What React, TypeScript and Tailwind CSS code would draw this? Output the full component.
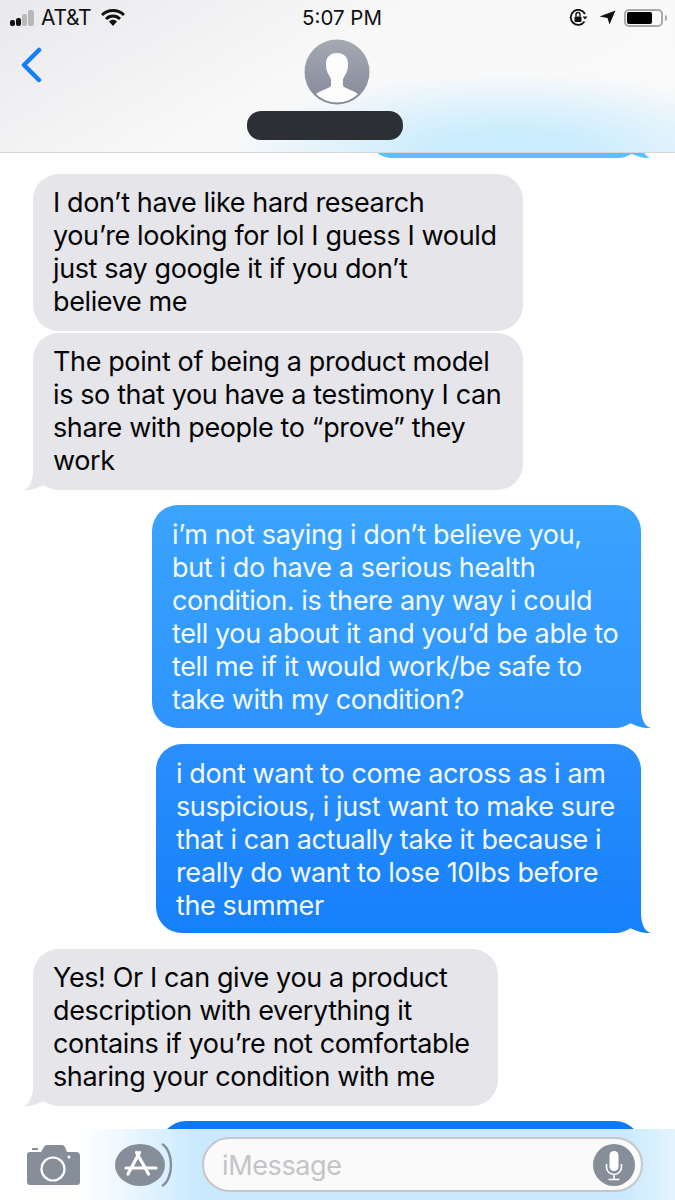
import React, { useId } from "react";

function TailR({ color, top, flip }: { color: string; top?: string; flip?: boolean }) {
  const id = useId();
  return (
    <svg
      width="40"
      height="30"
      viewBox="0 0 40 30"
      className={flip ? "absolute bottom-0 left-[-10px] -scale-x-100" : "absolute bottom-0 right-[-10px]"}
    >
      <defs>
        <linearGradient id={id} x1="0" y1="0" x2="0" y2="1">
          <stop offset="0" stopColor={top ?? color} />
          <stop offset="1" stopColor={color} />
        </linearGradient>
      </defs>
      <path d="M30 3 L30 10 C30 21 34 29 40 30 C32 30.5 25 28 19 25 C14 28 8 30 1 30 L0 3 Z" fill={`url(#${id})`} />
    </svg>
  );
}

function Lines({ lines }: { lines: string[] }) {
  return (
    <div className="relative z-[1]">
      {lines.map((l, i) => (
        <div key={i} className="whitespace-nowrap">{l}</div>
      ))}
    </div>
  );
}

function Gray({ lines, width, mt, tail }: { lines: string[]; width: string; mt: string; tail?: boolean }) {
  return (
    <div className={`relative self-start ml-[33px] ${mt} ${width} bg-[#e5e5ea] rounded-[26px] pl-[20px] pt-[12px] pb-[13px] text-[#050507]`}>
      <Lines lines={lines} />
      {tail && <TailR color="#e5e5ea" flip />}
    </div>
  );
}

function Blue({ lines, width, mt, bg, tailColor, tailTop, pb }: { lines: string[]; width: string; mt: string; bg: string; tailColor: string; tailTop: string; pb: string }) {
  return (
    <div className={`relative self-end mr-[34px] ${mt} ${width} ${bg} ${pb} rounded-[26px] pl-[20px] pt-[13px] text-[#f4f9ff]`}>
      <Lines lines={lines} />
      <TailR color={tailColor} top={tailTop} />
    </div>
  );
}

function StatusBar() {
  return (
    <div className="h-[35px] grid grid-cols-[1fr_auto_1fr] items-center pl-[10px] pr-[8px] text-[#111]">
      <div className="flex items-center">
        <div className="flex items-end gap-[1px] h-[16px] w-[26px]">
          <div className="w-[5px] h-[6px] rounded-[2px] bg-[#111]" />
          <div className="w-[5px] h-[8px] rounded-[2px] bg-[#111]" />
          <div className="w-[5px] h-[12px] rounded-[2px] bg-[#b9b9bc]" />
          <div className="w-[6px] h-[16px] rounded-[2px] bg-[#b9b9bc]" />
        </div>
        <span className="ml-[5px] text-[21px] leading-[24px] tracking-[-0.3px]">AT&amp;T</span>
        <svg width="24" height="17" viewBox="0 0 24 17" className="ml-[10px]">
          <path d="M1 6 C7 0 17 0 23 6" fill="none" stroke="#111" strokeWidth="3" />
          <path d="M5 10 C9 6 15 6 19 10" fill="none" stroke="#111" strokeWidth="3" />
          <path d="M8 12.5 C10.5 10 13.5 10 16 12.5 L12 17 Z" fill="#111" />
        </svg>
      </div>
      <div className="ml-[7px] text-[20.5px] leading-[24px]">5:07 PM</div>
      <div className="flex items-center justify-end">
        <svg width="19" height="17" viewBox="0 0 19 17">
          <path d="M15.5 12.5 A7.5 7.5 0 1 1 16 5" fill="none" stroke="#111" strokeWidth="1.8" />
          <path d="M13.5 7.5 L18.5 7.5 L16 10.5 Z" fill="#111" />
          <rect x="5.5" y="7.5" width="7" height="5.5" rx="1" fill="#111" />
          <path d="M7 7.5 V5.5 A2 2 0 0 1 11 5.5 V7.5" fill="none" stroke="#111" strokeWidth="1.4" />
        </svg>
        <svg width="17" height="15" viewBox="0 0 17 15" className="ml-[11px]">
          <path d="M0.5 6.5 L16.5 0.5 L10.5 14.5 L8.5 8 Z" fill="#111" />
        </svg>
        <div className="ml-[8px] w-[39px] h-[18px] rounded-[5px] border-2 border-[#a9a9ad] p-[1px] pr-[9px]">
          <div className="h-full rounded-[2px] bg-black" />
        </div>
        <div className="ml-[2px] w-[2px] h-[6px] rounded-r-[2px] bg-[#a9a9ad]" />
      </div>
    </div>
  );
}

function Header() {
  return (
    <div className="relative z-10 h-[153px] shrink-0 border-b border-[#d6d7d9] bg-[radial-gradient(ellipse_280px_80px_at_510px_153px,#c9ecfe_25%,rgba(220,242,254,0)_100%),linear-gradient(150deg,#e9e9ec,#f8f8f9_45%,#fafafa)]">
      <StatusBar />
      <div className="flex items-start">
        <svg width="24" height="38" viewBox="0 0 24 38" className="ml-[20px] mt-[12px]">
          <path d="M19 3 L4 18 L19 33" fill="none" stroke="#147efb" strokeWidth="4.5" strokeLinecap="round" strokeLinejoin="round" />
        </svg>
        <div className="ml-[203px] flex flex-col items-start">
          <svg width="66" height="66" viewBox="0 0 66 66" className="ml-[57px] mt-[4px]">
            <defs>
              <linearGradient id="av" x1="0" y1="0" x2="0" y2="1">
                <stop offset="0" stopColor="#a5a9b3" />
                <stop offset="1" stopColor="#85899a" />
              </linearGradient>
              <clipPath id="avc"><circle cx="33" cy="33" r="30.5" /></clipPath>
            </defs>
            <circle cx="33" cy="33" r="32.5" fill="url(#av)" />
            <path
              clipPath="url(#avc)"
              d="M33 14 C26 14 22 18 22 25 C22 28 22 30 23 32 C24 36 27 38 27 41 L27 47 C24 50 17 51 12 55 L12 66 L54 66 L54 55 C49 51 42 50 39 47 L39 41 C39 38 42 36 43 32 C44 30 44 28 44 25 C44 18 40 14 33 14 Z"
              fill="#fdfdfe"
            />
          </svg>
          <div className="mt-[6px] w-[156px] h-[29px] rounded-[14px] bg-[#2c2f33]" />
        </div>
      </div>
    </div>
  );
}

function Messages() {
  return (
    <div className="flex-1 min-h-0 overflow-hidden flex flex-col text-[27px] leading-[33px] tracking-[-0.38px] font-[Inter,sans-serif]">
      <div className="relative self-end mr-[34px] -mt-[40px] w-[272px] h-[45px] shrink-0 rounded-[26px] bg-[#5bc0fb]">
        <TailR color="#5bc0fb" />
      </div>
      <Gray
        mt="mt-[16px]"
        width="w-[490px]"
        lines={["I don’t have like hard research", "you’re looking for lol I guess I would", "just say google it if you don’t", "believe me"]}
      />
      <Gray
        mt="mt-[2px]"
        width="w-[490px]"
        tail
        lines={["The point of being a product model", "is so that you have a testimony I can", "share with people to “prove” they", "work"]}
      />
      <Blue
        mt="mt-[15px]"
        width="w-[489px]"
        pb="pb-[12px]"
        bg="bg-[linear-gradient(#3aa4fe,#2d94fd)]"
        tailColor="#2d94fd"
        tailTop="#2f96fd"
        lines={[
          "i’m not saying i don’t believe you,",
          "but i do have a serious health",
          "condition. is there any way i could",
          "tell you about it and you’d be able to",
          "tell me if it would work/be safe to",
          "take with my condition?",
        ]}
      />
      <Blue
        mt="mt-[16px]"
        width="w-[485px]"
        pb="pb-[11px]"
        bg="bg-[linear-gradient(#2a8ffc,#1680fb)]"
        tailColor="#1680fb"
        tailTop="#1983fb"
        lines={[
          "i dont want to come across as i am",
          "suspicious, i just want to make sure",
          "that i can actually take it because i",
          "really do want to lose 10lbs before",
          "the summer",
        ]}
      />
      <Gray
        mt="mt-[16px]"
        width="w-[465px]"
        tail
        lines={["Yes! Or I can give you a product", "description with everything it", "contains if you’re not comfortable", "sharing your condition with me"]}
      />
      <div className="self-end mr-[34px] mt-[15px] w-[481px] h-[60px] shrink-0 rounded-[26px] bg-[#0b78f6]" />
    </div>
  );
}

function InputBar() {
  return (
    <div className="h-[71px] shrink-0 flex items-start bg-[linear-gradient(90deg,#ffffff_12%,#c8e9fe_30%,#c8e9fe_92%,#e4f4fe_100%)]">
      <svg width="54" height="42" viewBox="0 0 54 42" className="ml-[27px] mt-[15px]">
        <path d="M3 8 H14 L17 3 Q18 1 20 1 H35 Q37 1 38 3 L40 8 H49 Q53 8 53 12 V38 Q53 41 50 41 H3 Q0 41 0 38 V11 Q0 8 3 8 Z" fill="#868e99" />
        <rect x="5" y="4" width="6" height="2" fill="#868e99" />
        <circle cx="26" cy="25" r="11.5" fill="none" stroke="#fff" strokeWidth="2.2" />
        <circle cx="42" cy="13" r="1.5" fill="#fff" />
      </svg>
      <svg width="58" height="44" viewBox="0 0 58 44" className="ml-[34px] mt-[14px]">
        <path d="M47 1 C59 8 59 36 47 43" fill="none" stroke="#868e99" strokeWidth="2.4" />
        <ellipse cx="25" cy="22" rx="25" ry="21" fill="#868e99" />
        <path d="M24.5 9.5 L13 31 M21.5 9.5 L33.5 31" stroke="#fff" strokeWidth="3.2" strokeLinecap="round" fill="none" />
        <path d="M11 25 H41" stroke="#fff" strokeWidth="3.2" strokeLinecap="round" fill="none" />
      </svg>
      <div className="ml-[29px] mt-[8px] w-[441px] h-[55px] rounded-[28px] border-2 border-[#c6c7cb] bg-[#fafafa] flex items-center pl-[18px] pr-[6px] justify-between">
        <span className="text-[27px] leading-[33px] tracking-[-0.38px] pt-[2px] text-[#c4c4c8] font-[Inter,sans-serif]">iMessage</span>
        <svg width="42" height="42" viewBox="0 0 42 42">
          <circle cx="21" cy="21" r="21" fill="#868e99" />
          <rect x="16.5" y="7" width="9" height="20" rx="4.5" fill="#fff" />
          <path d="M13.5 20 V23 A7.5 7.5 0 0 0 28.5 23 V20 M21 31 V35 M15.5 35.5 H26.5" fill="none" stroke="#fff" strokeWidth="1.6" />
        </svg>
      </div>
    </div>
  );
}

export default function App() {
  return (
    <div className="w-[675px] h-[1200px] overflow-hidden flex flex-col bg-white font-[Inter,sans-serif]">
      <Header />
      <Messages />
      <InputBar />
    </div>
  );
}
